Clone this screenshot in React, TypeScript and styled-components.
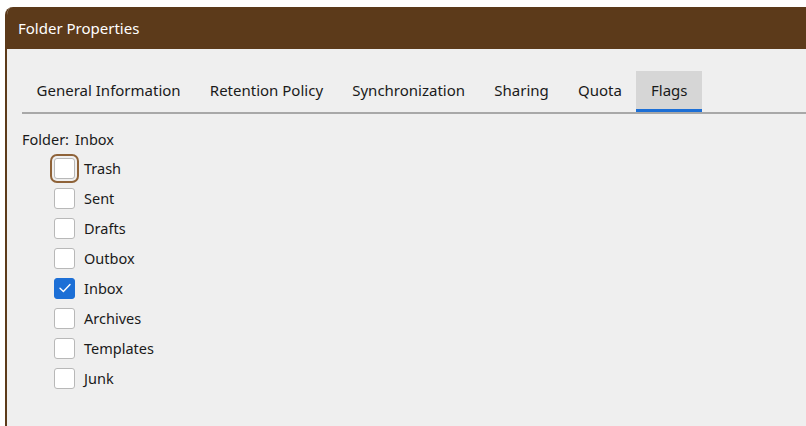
import React, { useState } from 'react';
import styled, { createGlobalStyle } from 'styled-components';

const GlobalStyle = createGlobalStyle`
    html, body {
        margin: 0;
        padding: 0;
        background: #ffffff;
        overflow: hidden;
    }
    body {
        font-family: "Noto Sans", "Open Sans", Arial, sans-serif;
    }
`;

const Window = styled.div`
    margin: 7px 0 0 5px;
    height: 419px;
    display: flex;
    flex-direction: column;
    border-left: 2px solid #5c3a1a;
    border-top-left-radius: 8px;
    overflow: hidden;
    background: #efefef;
`;

const TitleBar = styled.div`
    height: 42px;
    flex-shrink: 0;
    display: flex;
    align-items: center;
    padding-left: 11px;
    background: #5c3a1a;
    color: #ffffff;
    font-size: 15px;
`;

const Body = styled.div`
    padding: 22px 0 0 15px;
`;

const TabBar = styled.div`
    display: flex;
    border-bottom: 2px solid #a8a8a8;
`;

const Tab = styled.div<{ $active?: boolean }>`
    height: 38px;
    padding: 0 14.6px;
    display: flex;
    align-items: center;
    font-size: 15px;
    color: #1a1a1a;
    background: ${(p) => (p.$active ? '#d6d6d6' : 'transparent')};
    border-bottom: 3px solid ${(p) => (p.$active ? '#1c6fd6' : 'transparent')};
`;

const Content = styled.div`
    padding-top: 14px;
    font-size: 14.5px;
    color: #1a1a1a;
`;

const FolderRow = styled.div`
    display: flex;
    gap: 6px;
    height: 22px;
    align-items: center;
`;

const FlagList = styled.div`
    display: flex;
    flex-direction: column;
    padding: 3px 0 0 32px;
`;

const FlagRow = styled.label`
    height: 30px;
    display: flex;
    align-items: center;
    gap: 9px;
    cursor: default;
`;

const Box = styled.span<{ $checked?: boolean; $focused?: boolean }>`
    width: 21px;
    height: 21px;
    box-sizing: border-box;
    border-radius: 3px;
    border: 1px solid ${(p) => (p.$checked ? '#1c6fd6' : '#b8b8b8')};
    background: ${(p) => (p.$checked ? '#1c6fd6' : '#ffffff')};
    display: flex;
    align-items: center;
    justify-content: center;
    box-shadow: ${(p) => (p.$focused ? '0 0 0 2px #efefef, 0 0 0 4px #8e6238' : 'none')};
`;

const flags = ['Trash', 'Sent', 'Drafts', 'Outbox', 'Inbox', 'Archives', 'Templates', 'Junk'];
const tabs = ['General Information', 'Retention Policy', 'Synchronization', 'Sharing', 'Quota', 'Flags'];

const App = () => {
    const [checked, setChecked] = useState<string[]>(['Inbox']);

    const toggle = (name: string) => {
        setChecked(checked.includes(name) ? checked.filter((n) => n !== name) : [...checked, name]);
    };

    return (
        <>
            <GlobalStyle />
            <Window>
                <TitleBar>Folder Properties</TitleBar>
                <Body>
                    <TabBar>
                        {tabs.map((t) => (
                            <Tab key={t} $active={t === 'Flags'}>{t}</Tab>
                        ))}
                    </TabBar>
                    <Content>
                        <FolderRow>
                            <span>Folder:</span>
                            <span>Inbox</span>
                        </FolderRow>
                        <FlagList>
                            {flags.map((f, i) => (
                                <FlagRow key={f} onClick={() => toggle(f)}>
                                    <Box $checked={checked.includes(f)} $focused={i === 0}>
                                        {checked.includes(f) && (
                                            <svg width="14" height="14" viewBox="0 0 14 14">
                                                <path d="M2 7.2 L5.4 10.6 L12 3.6" fill="none" stroke="#ffffff" strokeWidth="1.4" strokeLinecap="round" strokeLinejoin="round" />
                                            </svg>
                                        )}
                                    </Box>
                                    <span>{f}</span>
                                </FlagRow>
                            ))}
                        </FlagList>
                    </Content>
                </Body>
            </Window>
        </>
    );
};

export default App;
